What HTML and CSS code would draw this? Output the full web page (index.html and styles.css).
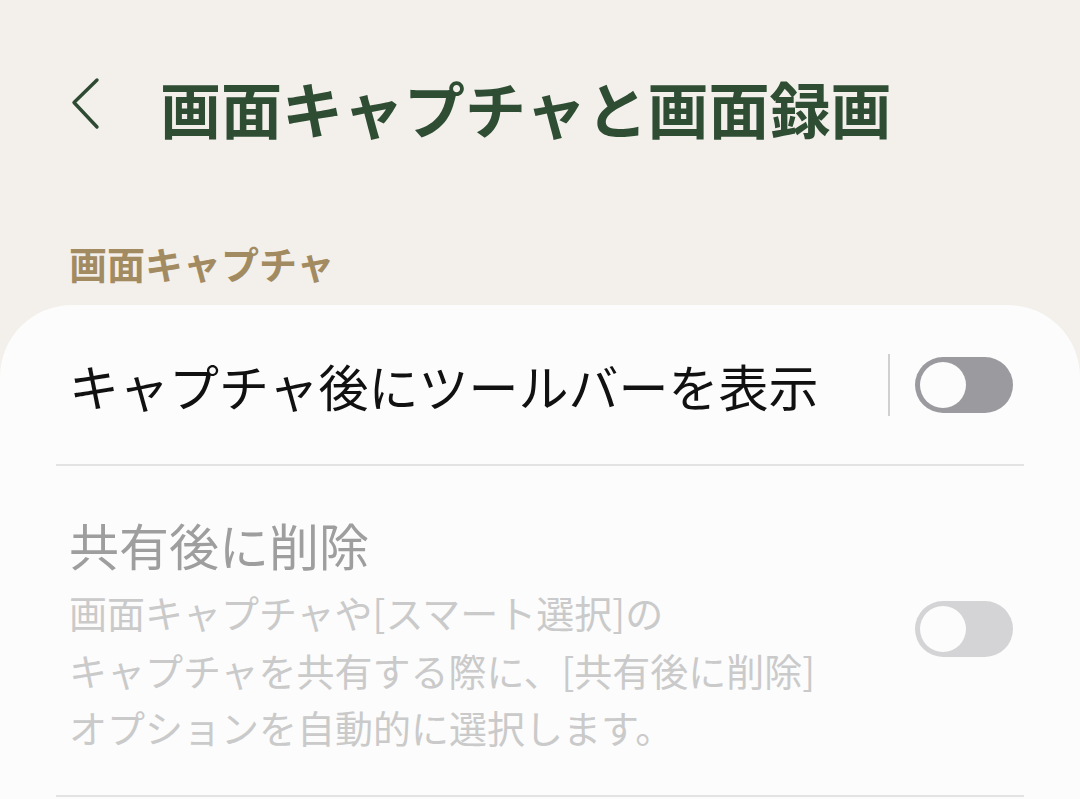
FILE: index.html
```html
<!DOCTYPE html>
<html lang="ja">
<head>
<meta charset="utf-8">
<link rel="stylesheet" href="styles.css">
</head>
<body>
<div class="page">
  <header class="header">
    <svg class="back" width="30" height="54" viewBox="0 0 30 54"><polyline points="26,3 3,25.5 26,50" fill="none" stroke="#2e4a33" stroke-width="3.4" stroke-linecap="round" stroke-linejoin="round"/></svg>
    <h1 class="title">画面キャプチャと画面録画</h1>
  </header>
  <div class="section">画面キャプチャ</div>
  <div class="card">
    <div class="row row-1">
      <div class="row-text">
        <div class="row-title">キャプチャ後にツールバーを表示</div>
      </div>
      <div class="vsep"></div>
      <div class="toggle"><div class="knob"></div></div>
    </div>
    <div class="divider"></div>
    <div class="row row-2">
      <div class="row-text">
        <div class="row-title dim">共有後に削除</div>
        <div class="row-sub">画面キャプチャや[スマート選択]の<br>キャプチャを共有する際に、[共有後に削除]<br>オプションを自動的に選択します。</div>
      </div>
      <div class="toggle disabled"><div class="knob"></div></div>
    </div>
    <div class="divider"></div>
  </div>
</div>
</body>
</html>
```

FILE: styles.css
```css
html, body {
  margin: 0;
  padding: 0;
}
body {
  background: #f3f0ec;
  font-family: "Noto Sans CJK JP", "Noto Sans", sans-serif;
  width: 1080px;
  height: 799px;
  overflow: hidden;
}
.page {
  display: flex;
  flex-direction: column;
  height: 799px;
}
.header {
  display: flex;
  align-items: center;
  padding: 68px 0 0 71px;
  height: 80px;
  flex: none;
}
.back {
  display: block;
  margin-right: 59px;
  margin-top: -8px;
}
.title {
  margin: 0;
  font-size: 61px;
  line-height: 80px;
  font-weight: 700;
  color: #2e4d33;
  white-space: nowrap;
}
.section {
  padding: 90px 0 0 69px;
  font-size: 38px;
  line-height: 50px;
  font-weight: 700;
  color: #a38b61;
  flex: none;
}
.card {
  margin-top: 17px;
  background: #fcfcfc;
  border-radius: 72px 72px 0 0;
  display: flex;
  flex-direction: column;
  flex: 1;
  min-height: 0;
}
.row {
  display: flex;
  align-items: center;
  padding: 0 67px 0 69px;
  flex: none;
}
.row-1 {
  height: 159px;
}
.row-2 {
  padding-top: 48px;
  padding-bottom: 39px;
}
.row-text {
  flex: 1;
  display: flex;
  flex-direction: column;
}
.row-title {
  font-size: 50px;
  line-height: 60px;
  color: #111;
}
.row-title.dim {
  color: #9e9e9e;
}
.row-sub {
  margin-top: 9px;
  font-size: 38px;
  line-height: 57.5px;
  color: #cacaca;
  white-space: nowrap;
}
.vsep {
  width: 2px;
  height: 62px;
  background: #d0d0d0;
  margin-right: 25px;
}
.toggle {
  width: 98px;
  height: 56px;
  border-radius: 28px;
  background: #9b9a9f;
  display: flex;
  align-items: center;
  padding-left: 5px;
  box-sizing: border-box;
}
.toggle .knob {
  width: 46px;
  height: 46px;
  border-radius: 50%;
  background: #fcfcfc;
}
.toggle.disabled {
  background: #d4d4d6;
  margin-bottom: 12px;
}
.divider {
  height: 2px;
  background: #e3e3e3;
  margin: 0 56px;
  flex: none;
}
```
